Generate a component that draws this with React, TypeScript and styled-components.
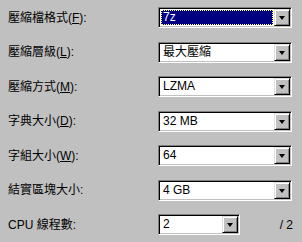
import styled, { createGlobalStyle } from "styled-components";

const GlobalStyle = createGlobalStyle`
  html, body {
    margin: 0;
    padding: 0;
    background: #c0c0c0;
  }
  body {
    font-family: "Liberation Sans", "Noto Sans CJK TC", sans-serif;
    font-size: 12px;
    color: #000;
  }
`;

type Row = {
  label: string;
  key?: string;
  value: string;
  selected?: boolean;
  narrow?: boolean;
  extra?: string;
};

const rows: Row[] = [
  { label: "壓縮檔格式", key: "F", value: "7z", selected: true },
  { label: "壓縮層級", key: "L", value: "最大壓縮" },
  { label: "壓縮方式", key: "M", value: "LZMA" },
  { label: "字典大小", key: "D", value: "32 MB" },
  { label: "字組大小", key: "W", value: "64" },
  { label: "結實區塊大小", value: "4 GB" },
  { label: "CPU 線程數", value: "2", narrow: true, extra: "/ 2" },
];

export default function App() {
  return (
    <>
      <GlobalStyle />
      <Panel>
        {rows.map((row) => (
          <FormRow key={row.label}>
            <Label>
              {row.label}
              {row.key && (
                <>
                  (<u>{row.key}</u>)
                </>
              )}
              :
            </Label>
            <Field>
              <Combo $narrow={row.narrow}>
                <Value $selected={row.selected}>{row.value}</Value>
                <DropButton>
                  <Arrow />
                </DropButton>
              </Combo>
              {row.extra && <Extra>{row.extra}</Extra>}
            </Field>
          </FormRow>
        ))}
      </Panel>
    </>
  );
}

const Panel = styled.div`
  width: 302px;
  height: 242px;
  box-sizing: border-box;
  padding: 7px 10px 0 8px;
  display: flex;
  flex-direction: column;
  gap: 13.5px;
`;

const FormRow = styled.div`
  display: grid;
  grid-template-columns: 150px 1fr;
  align-items: center;
  height: 21px;
`;

const Label = styled.div`
  white-space: nowrap;
  line-height: 14px;

  u {
    text-decoration: underline;
    text-underline-offset: 1px;
  }
`;

const Field = styled.div`
  display: flex;
  align-items: center;
`;

interface ComboProps {
  $narrow?: boolean;
}

const Combo = styled.div<ComboProps>`
  width: ${(p) => (p.$narrow ? "82px" : "134px")};
  height: 21px;
  box-sizing: border-box;
  display: flex;
  padding: 2px;
  background: #fff;
  border: 1px solid;
  border-color: #808080 #fff #fff #808080;
  box-shadow: inset 1px 1px #000, inset -1px -1px #c0c0c0;
`;

interface ValueProps {
  $selected?: boolean;
}

const Value = styled.div<ValueProps>`
  flex: 1;
  display: flex;
  align-items: center;
  padding-left: 1px;
  margin-right: 1px;
  box-sizing: border-box;
  line-height: 13px;
  background: ${(p) => (p.$selected ? "#000080" : "#fff")};
  color: ${(p) => (p.$selected ? "#fff" : "#000")};
  border: 1px dotted ${(p) => (p.$selected ? "#ffff7f" : "transparent")};
`;

const DropButton = styled.div`
  width: 16px;
  height: 17px;
  margin-top: -1px;
  margin-right: -1px;
  box-sizing: border-box;
  display: flex;
  align-items: center;
  justify-content: center;
  background: #c0c0c0;
  border: 1px solid;
  border-color: #dfdfdf #000 #000 #dfdfdf;
  box-shadow: inset 1px 1px #fff, inset -1px -1px #808080;
`;

const Arrow = styled.div`
  width: 0;
  height: 0;
  border-left: 3.5px solid transparent;
  border-right: 3.5px solid transparent;
  border-top: 4px solid #000;
  margin-top: 1px;
`;

const Extra = styled.div`
  margin-left: auto;
  margin-right: -1px;
`;
